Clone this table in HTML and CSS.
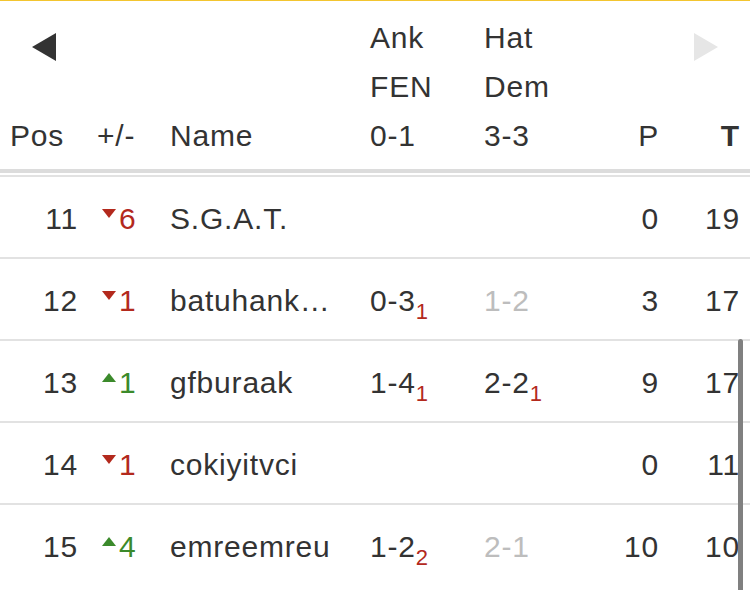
FILE: index.html
```html
<!DOCTYPE html>
<html lang="tr">
<head>
<meta charset="utf-8">
<title>Standings</title>
<link rel="stylesheet" href="styles.css">
</head>
<body>
<div class="topline"></div>
<div class="standings">
  <div class="head">
    <button class="nav nav-prev" aria-label="previous">
      <svg width="24" height="28" viewBox="0 0 24 28"><path d="M24 0 L0 14 L24 28 Z"/></svg>
    </button>
    <button class="nav nav-next" aria-label="next">
      <svg width="24" height="28" viewBox="0 0 24 28"><path d="M0 0 L24 14 L0 28 Z"/></svg>
    </button>
    <div class="hcell pos-h">Pos</div>
    <div class="hcell diff-h">+/-</div>
    <div class="hcell">Name</div>
    <div class="hcell">Ank<br>FEN<br>0-1</div>
    <div class="hcell">Hat<br>Dem<br>3-3</div>
    <div class="hcell num">P</div>
    <div class="hcell num bold">T</div>
  </div>

  <div class="rows">
    <div class="row">
      <div class="pos">11</div>
      <div class="delta down"><svg class="tri" width="14" height="9" viewBox="0 0 14 9"><path d="M0 0 H14 L7 9 Z"/></svg>6</div>
      <div class="name">S.G.A.T.</div>
      <div class="score"></div>
      <div class="score"></div>
      <div class="num">0</div>
      <div class="num">19</div>
    </div>
    <div class="row">
      <div class="pos">12</div>
      <div class="delta down"><svg class="tri" width="14" height="9" viewBox="0 0 14 9"><path d="M0 0 H14 L7 9 Z"/></svg>1</div>
      <div class="name">batuhank…</div>
      <div class="score">0-3<sub>1</sub></div>
      <div class="score muted">1-2</div>
      <div class="num">3</div>
      <div class="num">17</div>
    </div>
    <div class="row">
      <div class="pos">13</div>
      <div class="delta up"><svg class="tri" width="14" height="9" viewBox="0 0 14 9"><path d="M0 9 H14 L7 0 Z"/></svg>1</div>
      <div class="name">gfburaak</div>
      <div class="score">1-4<sub>1</sub></div>
      <div class="score">2-2<sub>1</sub></div>
      <div class="num">9</div>
      <div class="num">17</div>
    </div>
    <div class="row">
      <div class="pos">14</div>
      <div class="delta down"><svg class="tri" width="14" height="9" viewBox="0 0 14 9"><path d="M0 0 H14 L7 9 Z"/></svg>1</div>
      <div class="name">cokiyitvci</div>
      <div class="score"></div>
      <div class="score"></div>
      <div class="num">0</div>
      <div class="num">11</div>
    </div>
    <div class="row">
      <div class="pos">15</div>
      <div class="delta up"><svg class="tri" width="14" height="9" viewBox="0 0 14 9"><path d="M0 9 H14 L7 0 Z"/></svg>4</div>
      <div class="name">emreemreu</div>
      <div class="score">1-2<sub>2</sub></div>
      <div class="score muted">2-1</div>
      <div class="num">10</div>
      <div class="num">10</div>
    </div>
  </div>
</div>
<div class="scrollbar"></div>
</body>
</html>
```

FILE: styles.css
```css
html, body {
  margin: 0;
  padding: 0;
  background: #fff;
}

body {
  font-family: "Liberation Sans", Arial, sans-serif;
  font-size: 30px;
  letter-spacing: 0.8px;
  color: #333;
  overflow: hidden;
}

.topline {
  height: 1px;
  background: #f3c52f;
}

.standings {
  position: relative;
}

.head,
.row {
  display: grid;
  grid-template-columns: 96px 74px 200px 114px 114px 61px 81px;
}

.head {
  position: relative;
  height: 172px;
  box-sizing: border-box;
  padding-bottom: 9px;
  align-items: end;
  line-height: 49px;
  border-bottom: 4px solid #dcdcdc;
}

.hcell {
  white-space: nowrap;
}

.pos-h {
  padding-left: 10px;
}

.diff-h {
  padding-left: 1px;
}

.bold {
  font-weight: bold;
}

.num {
  text-align: right;
}

.nav {
  position: absolute;
  top: 32px;
  width: 24px;
  height: 28px;
  padding: 0;
  border: 0;
  background: none;
  display: block;
}

.nav svg {
  display: block;
}

.nav-prev {
  left: 32px;
  fill: #333;
}

.nav-next {
  left: 694px;
  fill: #e6e6e6;
}

.rows {
  margin-top: 2px;
}

.row {
  height: 82px;
  box-sizing: border-box;
  border-top: 2px solid #e2e2e2;
  padding-top: 3px;
  align-items: center;
  white-space: nowrap;
}

.pos {
  text-align: right;
  padding-right: 18px;
}

.delta {
  padding-left: 6px;
}

.tri {
  vertical-align: 11px;
  margin-right: 3px;
}

.down {
  color: #b3291d;
  fill: #b3291d;
}

.up {
  color: #3b8a2b;
  fill: #3b8a2b;
}

.name {
  overflow: hidden;
}

.score sub {
  font-size: 22px;
  line-height: 0;
  vertical-align: -8px;
  color: #b3291d;
  letter-spacing: 0;
}

.muted {
  color: #bdbdbd;
}

.scrollbar {
  position: fixed;
  left: 738px;
  top: 339px;
  width: 5px;
  height: 270px;
  border-radius: 3px;
  background: #808080;
}
```
